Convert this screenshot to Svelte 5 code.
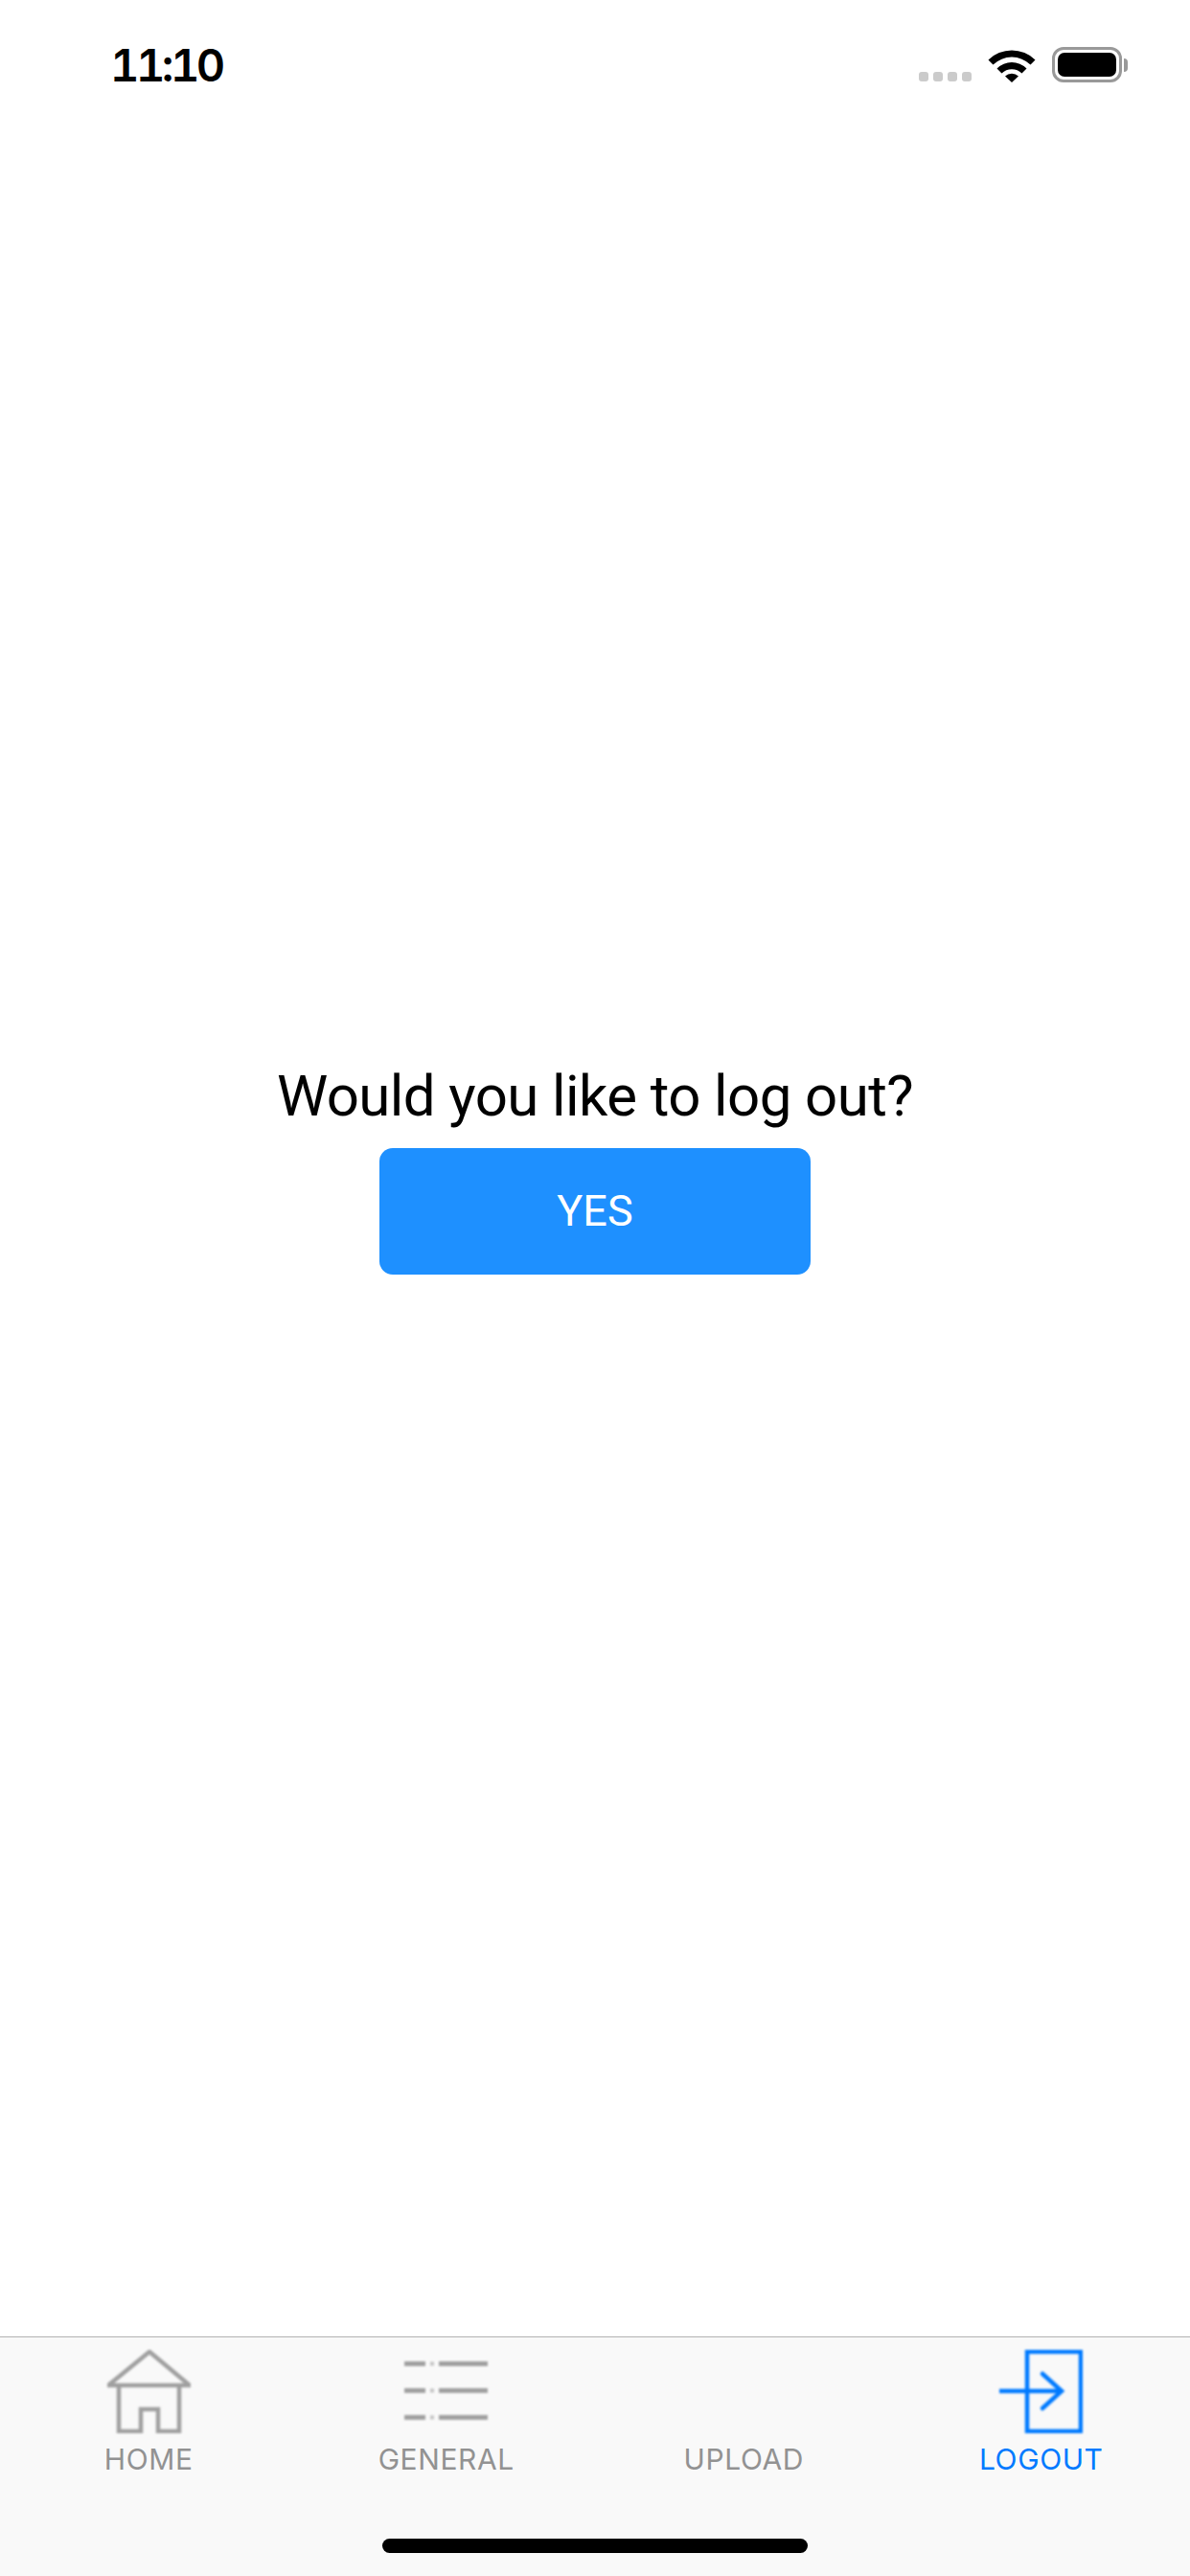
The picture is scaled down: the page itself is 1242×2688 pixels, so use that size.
<script>
  const tabs = [
    { key: 'home', label: 'HOME' },
    { key: 'general', label: 'GENERAL' },
    { key: 'upload', label: 'UPLOAD' },
    { key: 'logout', label: 'LOGOUT' }
  ];
  let active = $state('logout');
</script>

<div class="screen">
  <header class="status">
    <span class="time">11:10</span>
    <div class="indicators">
      <div class="signal">
        <i></i><i></i><i></i><i></i>
      </div>
      <svg class="wifi" width="50" height="37" viewBox="0 0 50 37">
        <path d="M0.5 13.5 A35 35 0 0 1 49.5 13.5 L44.5 18.5 A28 28 0 0 0 5.5 18.5 Z" fill="#000" />
        <path d="M9.5 22.5 A22 22 0 0 1 40.5 22.5 L35.5 27.5 A15 15 0 0 0 14.5 27.5 Z" fill="#000" />
        <path d="M18 30.5 A10 10 0 0 1 32 30.5 L25 37 Z" fill="#000" />
      </svg>
      <div class="battery">
        <div class="cell"></div>
      </div>
      <div class="nub"></div>
    </div>
  </header>

  <main class="content">
    <p class="question">Would you like to log out?</p>
    <button class="yes">YES</button>
  </main>

  <nav class="tabbar">
    {#each tabs as tab}
      <button class="tab" class:active={active === tab.key} onclick={() => (active = tab.key)}>
        <span class="icon">
          {#if tab.key === 'home'}
            <svg width="87" height="87" viewBox="0 0 87 87" fill="none" stroke="#a0a0a0" stroke-width="4.5">
              <path d="M1 37 L44 2 L86 37 Z" />
              <path d="M12 37 V85 H35 V62 H53 V85 H75 V37" />
            </svg>
          {:else if tab.key === 'general'}
            <svg width="87" height="87" viewBox="0 0 87 87" fill="#a0a0a0">
              {#each [12, 40, 68] as y}
                <rect x="0" {y} width="22" height="5" />
                <rect x="27" y={y + 0.5} width="4" height="4" opacity="0.6" />
                <rect x="36" {y} width="51" height="5" />
              {/each}
            </svg>
          {:else if tab.key === 'logout'}
            <svg width="87" height="87" viewBox="0 0 87 87" fill="none" stroke="#007aff" stroke-width="4.5">
              <path d="M29 2 H85 V85 H29 Z" />
              <path d="M0 43 H65" />
              <path d="M45 25 L65 43 L45 61" stroke-linecap="round" />
            </svg>
          {/if}
        </span>
        <span class="label">{tab.label}</span>
      </button>
    {/each}
    <div class="home-bar"></div>
  </nav>
</div>

<style>
  :global(body) {
    margin: 0;
    background: #fff;
  }

  .screen {
    width: 1242px;
    height: 2688px;
    display: flex;
    flex-direction: column;
    font-family: Roboto, "Liberation Sans", sans-serif;
    overflow: hidden;
  }

  .status {
    height: 132px;
    box-sizing: border-box;
    flex: none;
    display: flex;
    align-items: flex-start;
    justify-content: space-between;
    padding: 49px 65px 0 115px;
  }

  .time {
    font-family: Inter, sans-serif;
    font-size: 47px;
    line-height: 37px;
    font-weight: 600;
    color: #000;
    font-variant-numeric: tabular-nums;
    letter-spacing: -3.5px;
  }

  .indicators {
    display: flex;
    align-items: flex-start;
    height: 37px;
  }

  .signal {
    display: flex;
    gap: 5px;
    margin: 26px 17px 0 0;
  }

  .signal i {
    display: block;
    width: 10px;
    height: 10px;
    border-radius: 3px;
    background: #cbcbcb;
  }

  .wifi {
    display: block;
    margin-right: 17px;
  }

  .battery {
    width: 73px;
    height: 37px;
    box-sizing: border-box;
    border: 3px solid #999;
    border-radius: 12px;
    padding: 3px;
  }

  .cell {
    height: 100%;
    background: #000;
    border-radius: 7px;
  }

  .nub {
    width: 4px;
    height: 14px;
    margin: 12px 0 0 2px;
    background: #999;
    border-radius: 0 4px 4px 0;
  }

  .content {
    flex: 1;
    box-sizing: border-box;
    display: flex;
    flex-direction: column;
    align-items: center;
    justify-content: center;
    padding-bottom: 132px;
  }

  .question {
    margin: 0 0 20px;
    font-size: 60px;
    line-height: 69px;
    letter-spacing: -0.6px;
    color: #000;
  }

  .yes {
    width: 450px;
    height: 132px;
    border: none;
    border-radius: 14px;
    background: #1e90ff;
    color: #fff;
    font-family: inherit;
    font-size: 45px;
    padding: 0;
  }

  .tabbar {
    position: relative;
    flex: none;
    height: 250px;
    box-sizing: border-box;
    border-top: 1px solid #b2b2b2;
    background: #f9f9f9;
    display: grid;
    grid-template-columns: repeat(4, 1fr);
    align-items: start;
    padding-top: 13px;
  }

  .tab {
    border: none;
    background: none;
    padding: 0;
    display: flex;
    flex-direction: column;
    align-items: center;
    font-family: Inter, sans-serif;
    color: #929292;
  }

  .tab.active {
    color: #007aff;
  }

  .icon {
    display: block;
    width: 87px;
    height: 87px;
  }

  .icon svg {
    display: block;
    filter: blur(1px);
  }

  .label {
    margin-top: 9px;
    font-size: 30px;
    line-height: 36px;
    letter-spacing: 0.6px;
  }

  .home-bar {
    position: absolute;
    left: 399px;
    top: 210px;
    width: 444px;
    height: 15px;
    border-radius: 8px;
    background: #000;
  }
</style>
